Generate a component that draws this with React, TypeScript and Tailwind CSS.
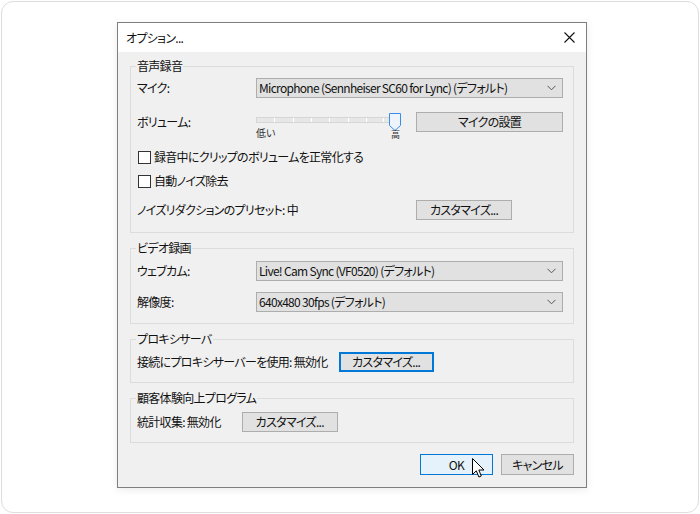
const FONT = "font-['Noto_Sans_CJK_JP',sans-serif] [font-feature-settings:'palt']";

function Chevron() {
  return (
    <svg width="9" height="6" viewBox="0 0 9 6" fill="none">
      <path d="M0.5 0.8 L4.5 4.8 L8.5 0.8" stroke="#555" strokeWidth="1" />
    </svg>
  );
}

function Select({ value }: { value: string }) {
  return (
    <div className="flex h-[20px] w-[307px] items-center justify-between border border-[#adadad] bg-[#e1e1e1] pl-[2px] pr-[6px]">
      <span className="whitespace-nowrap">{value}</span>
      <Chevron />
    </div>
  );
}

function Button({
  children,
  className = '',
  focused = false,
}: {
  children: React.ReactNode;
  className?: string;
  focused?: boolean;
}) {
  return (
    <div
      className={
        'flex h-[20px] items-center justify-center whitespace-nowrap ' +
        (focused
          ? 'border-2 border-[#0078d7] bg-[#e1e1e1] '
          : 'border border-[#adadad] bg-[#e1e1e1] ') +
        className
      }
    >
      {children}
    </div>
  );
}

function Checkbox({ label }: { label: string }) {
  return (
    <div className="flex h-[20px] items-center gap-[3px]">
      <div className="ml-px h-[13px] w-[13px] border border-[#333] bg-white" />
      <span>{label}</span>
    </div>
  );
}

function Group({
  title,
  className = '',
  children,
}: {
  title: string;
  className?: string;
  children: React.ReactNode;
}) {
  return (
    <fieldset className={'border border-[#dcdcdc] pl-[6px] pr-[10px] ' + className}>
      <legend className="-ml-[1px] px-[1px] leading-[16px]">{title}</legend>
      {children}
    </fieldset>
  );
}

function Slider() {
  const ticks = [17, 36, 54, 72, 91, 109, 126];
  return (
    <div className="relative h-[20px] w-[160px]">
      <div className="absolute left-0 top-[5px] h-[6px] w-[141px] border border-[#d6d6d6] bg-[#e7e7e7]">
        {ticks.map((t) => (
          <div key={t} className="absolute top-0 h-full w-px bg-white" style={{ left: t }} />
        ))}
      </div>
      <svg className="absolute left-[133px] top-[1px]" width="12" height="18" viewBox="0 0 12 18">
        <path d="M0.5 0.5 H11.5 V12.5 L6 17.5 L0.5 12.5 Z" fill="#eef4fb" stroke="#3b8ee6" strokeWidth="1" />
      </svg>
      <span className="absolute left-0 top-[16px] text-[10px] leading-[10px] tracking-normal text-[#333]">低い</span>
      <span className="absolute left-[135px] top-[18px] text-[9px] leading-[10px] tracking-normal text-[#333]">高</span>
    </div>
  );
}

function Cursor() {
  return (
    <svg className="pointer-events-none absolute left-[51px] top-[3px]" width="13" height="21" viewBox="0 0 13 21">
      <path
        d="M0.5 0.5 L0.5 16.5 L4.3 12.8 L6.9 19 L9.3 18 L6.8 12 L12 12 Z"
        fill="#fff"
        stroke="#000"
        strokeWidth="1"
        strokeLinejoin="round"
      />
    </svg>
  );
}

export default function App() {
  return (
    <div className={'h-[514px] w-[700px] bg-white text-[12px] leading-[16px] tracking-[-0.7px] text-[#111] ' + FONT}>
      <div className="m-px h-[512px] w-[698px] rounded-[12px] border border-[#dddddd] pl-[115px] pt-[20px]">
        <div className="w-[470px] border border-[#7f7f7f] bg-[#f0f0f0] shadow-[0_2px_8px_rgba(0,0,0,0.08)]">
          {/* title bar */}
          <div className="flex h-[29px] items-center justify-between bg-white pl-[8px] pr-[11px]">
            <span>オプション...</span>
            <svg width="11" height="11" viewBox="0 0 11 11">
              <path d="M0.5 0.5 L10.5 10.5 M10.5 0.5 L0.5 10.5" stroke="#111" strokeWidth="1.1" />
            </svg>
          </div>

          <div className="flex flex-col px-[12px] pb-[12px] pt-[6px]">
            <Group title="音声録音" className="pb-[12px]">
              <div className="mt-[4px] flex h-[20px] items-center">
                <span className="w-[119px]">マイク:</span>
                <Select value="Microphone (Sennheiser SC60 for Lync) (デフォルト)" />
              </div>
              <div className="mt-[14px] flex h-[20px] items-center">
                <span className="w-[119px]">ボリューム:</span>
                <Slider />
                <Button className="w-[147px]">マイクの設置</Button>
              </div>
              <div className="mt-[15px]">
                <Checkbox label="録音中にクリップのボリュームを正常化する" />
              </div>
              <div className="mt-[4px]">
                <Checkbox label="自動ノイズ除去" />
              </div>
              <div className="mt-[9px] flex h-[20px] items-center">
                <span className="w-[279px]">ノイズリダクションのプリセット:&nbsp;中</span>
                <Button className="w-[96px]">カスタマイズ...</Button>
              </div>
            </Group>

            <Group title="ビデオ録画" className="mt-[7px] pb-[11px]">
              <div className="mt-[5px] flex h-[20px] items-center">
                <span className="w-[119px]">ウェブカム:</span>
                <Select value="Live! Cam Sync (VF0520) (デフォルト)" />
              </div>
              <div className="mt-[11px] flex h-[20px] items-center">
                <span className="w-[119px]">解像度:</span>
                <Select value="640x480 30fps (デフォルト)" />
              </div>
            </Group>

            <Group title="プロキシサーバ" className="mt-[7px] pb-[10px]">
              <div className="mt-[5px] flex h-[20px] items-center gap-[11px]">
                <span>接続にプロキシサーバーを使用:&nbsp;無効化</span>
                <Button focused className="w-[95px]">
                  カスタマイズ...
                </Button>
              </div>
            </Group>

            <Group title="顧客体験向上プログラム" className="mt-[7px] pb-[10px]">
              <div className="mt-[6px] flex h-[20px] items-center gap-[21px]">
                <span>統計収集:&nbsp;無効化</span>
                <Button className="w-[96px]">カスタマイズ...</Button>
              </div>
            </Group>

            <div className="mt-[11px] flex justify-end gap-[8px]">
              <div className="relative flex h-[21px] w-[73px] items-center justify-center border border-[#0078d7] bg-[#e5f1fb]">
                OK
                <Cursor />
              </div>
              <div className="flex h-[21px] w-[73px] items-center justify-center border border-[#adadad] bg-[#e1e1e1]">
                キャンセル
              </div>
            </div>
          </div>
        </div>
      </div>
    </div>
  );
}
